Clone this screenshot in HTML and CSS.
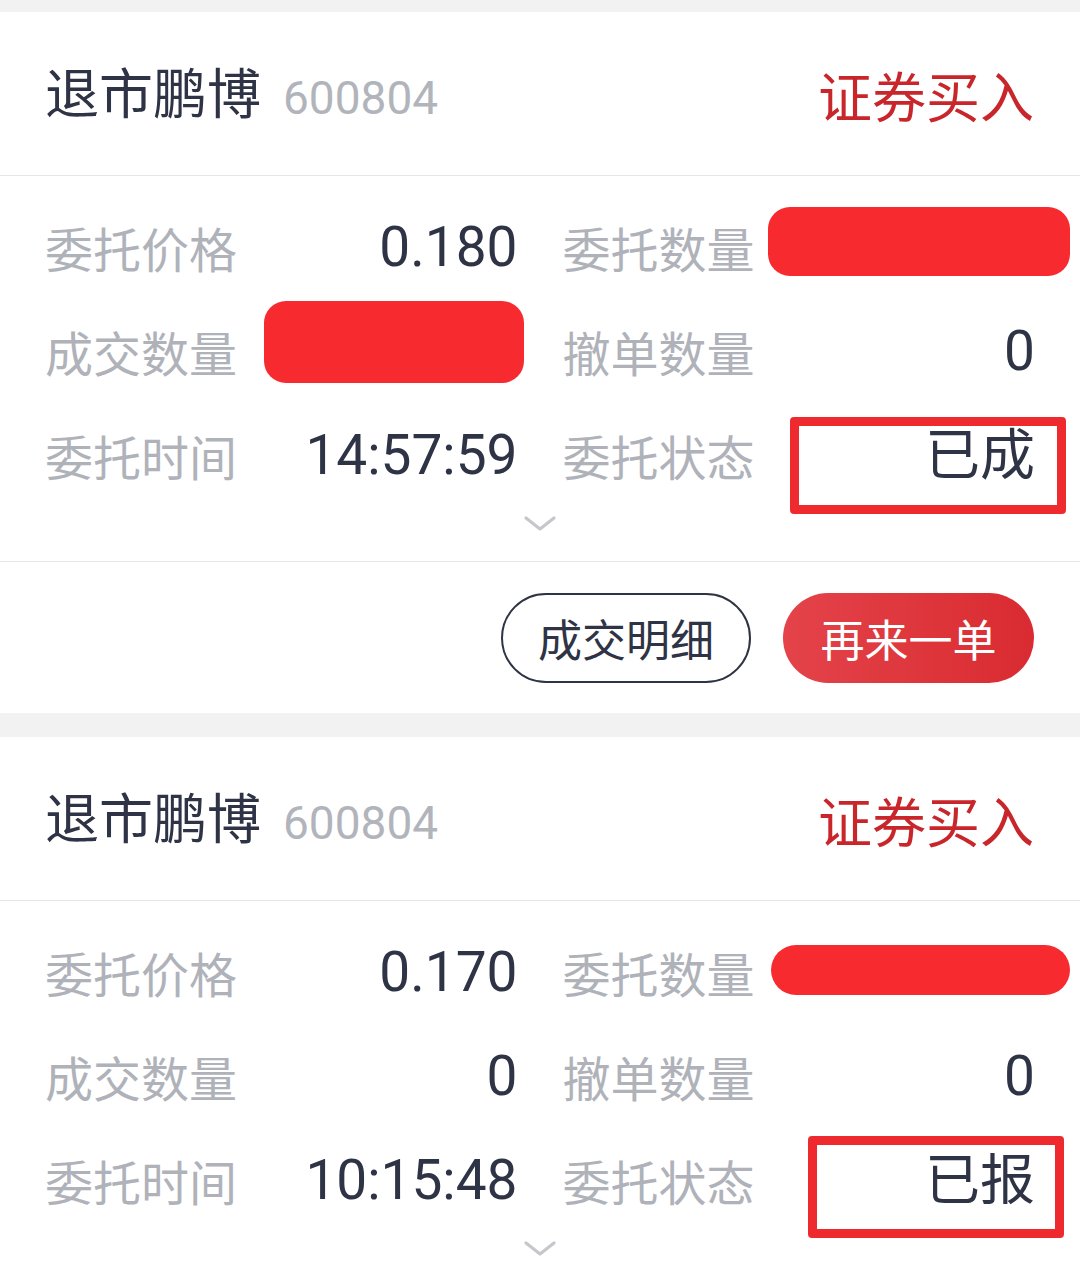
FILE: index.html
```html
<!DOCTYPE html>
<html lang="zh-CN">
<head>
<meta charset="utf-8">
<title>委托列表</title>
<link rel="stylesheet" href="styles.css">
</head>
<body>
<div class="list">
  <section class="card">
    <header class="card-head">
      <div class="title"><span class="name">退市鹏博</span><span class="code">600804</span></div>
      <div class="side">证券买入</div>
    </header>
    <div class="grid">
      <div class="cell"><span class="label">委托价格</span><span class="value">0.180</span></div>
      <div class="cell"><span class="label">委托数量</span><span class="value"></span></div>
      <div class="cell"><span class="label">成交数量</span><span class="value"></span></div>
      <div class="cell"><span class="label">撤单数量</span><span class="value">0</span></div>
      <div class="cell"><span class="label">委托时间</span><span class="value">14:57:59</span></div>
      <div class="cell"><span class="label">委托状态</span><span class="value">已成</span></div>
    </div>
    <div class="more"><svg class="chev" width="32" height="16" viewBox="0 0 32 16"><path d="M2 2 L16 13 L30 2" fill="none" stroke="#c6c7cc" stroke-width="3.2" stroke-linecap="round" stroke-linejoin="round"/></svg></div>
    <div class="actions">
      <button class="btn btn-outline">成交明细</button>
      <button class="btn btn-red">再来一单</button>
    </div>
    <div class="mask m1"></div>
    <div class="mask m2"></div>
    <div class="mark k1"></div>
  </section>
  <section class="card">
    <header class="card-head">
      <div class="title"><span class="name">退市鹏博</span><span class="code">600804</span></div>
      <div class="side">证券买入</div>
    </header>
    <div class="grid">
      <div class="cell"><span class="label">委托价格</span><span class="value">0.170</span></div>
      <div class="cell"><span class="label">委托数量</span><span class="value"></span></div>
      <div class="cell"><span class="label">成交数量</span><span class="value">0</span></div>
      <div class="cell"><span class="label">撤单数量</span><span class="value">0</span></div>
      <div class="cell"><span class="label">委托时间</span><span class="value">10:15:48</span></div>
      <div class="cell"><span class="label">委托状态</span><span class="value">已报</span></div>
    </div>
    <div class="more"><svg class="chev" width="32" height="16" viewBox="0 0 32 16"><path d="M2 2 L16 13 L30 2" fill="none" stroke="#c6c7cc" stroke-width="3.2" stroke-linecap="round" stroke-linejoin="round"/></svg></div>
    <div class="actions">
      <button class="btn btn-outline">成交明细</button>
      <button class="btn btn-red">再来一单</button>
    </div>
    <div class="mask m3"></div>
    <div class="mark k2"></div>
  </section>
</div>
</body>
</html>
```
FILE: styles.css
```css
html, body {
  margin: 0;
  padding: 0;
  background: #f2f2f2;
}
body {
  font-family: "Noto Sans CJK SC", "Noto Sans", sans-serif;
  color: #2e3345;
}
.list {
  display: flex;
  flex-direction: column;
  gap: 24px;
  padding-top: 12px;
}
.card {
  position: relative;
  background: #ffffff;
}
.card-head {
  height: 164px;
  display: flex;
  align-items: center;
  justify-content: space-between;
  padding: 2px 46px 0 45px;
  box-sizing: border-box;
  border-bottom: 1px solid #e6e6e8;
}
.title {
  display: flex;
  align-items: baseline;
}
.name {
  font-size: 54px;
  line-height: 1;
  color: #2e3345;
}
.code {
  font-family: Roboto, "Noto Sans", sans-serif;
  font-size: 46px;
  color: #b2b4bb;
  margin-left: 22px;
}
.side {
  font-size: 54px;
  line-height: 1;
  color: #c8262b;
}
.grid {
  display: grid;
  grid-template-columns: 1fr 1fr;
  grid-auto-rows: 104px;
  column-gap: 45px;
  padding: 19px 45px 0 45px;
}
.cell {
  display: flex;
  align-items: center;
  justify-content: space-between;
}
.label {
  font-size: 48px;
  color: #b0b2ba;
  line-height: 1;
}
.value {
  font-family: Roboto, "Noto Sans CJK SC", sans-serif;
  font-size: 55px;
  color: #2e3345;
  line-height: 1;
}
.more {
  height: 54px;
  display: flex;
  justify-content: center;
  align-items: flex-start;
  border-bottom: 1px solid #e6e6e8;
}
.chev {
  display: block;
  margin-top: 9px;
}
.actions {
  display: flex;
  justify-content: flex-end;
  gap: 32px;
  padding: 31px 46px 30px 0;
}
.btn {
  height: 90px;
  border-radius: 45px;
  font-family: "Noto Sans CJK SC", sans-serif;
  font-size: 44px;
  line-height: 1;
  padding: 0;
  display: flex;
  align-items: center;
  justify-content: center;
}
.btn-outline {
  width: 250px;
  background: #ffffff;
  border: 2px solid #2e3345;
  color: #2e3345;
}
.btn-red {
  width: 251px;
  border: none;
  color: #ffffff;
  background: linear-gradient(90deg, #e4434a 0%, #d92b31 100%);
}
.mask {
  position: absolute;
  background: #f72a2f;
}
.m1 { left: 768px; top: 195px; width: 302px; height: 69px; border-radius: 22px; }
.m2 { left: 264px; top: 289px; width: 260px; height: 82px; border-radius: 22px; }
.m3 { left: 771px; top: 208px; width: 299px; height: 50px; border-radius: 25px; }
.mark {
  position: absolute;
  border: 9px solid #ee2a2f;
  border-radius: 4px;
  box-sizing: border-box;
}
.k1 { left: 790px; top: 405px; width: 276px; height: 97px; }
.k2 { left: 808px; top: 399px; width: 256px; height: 102px; }
```
